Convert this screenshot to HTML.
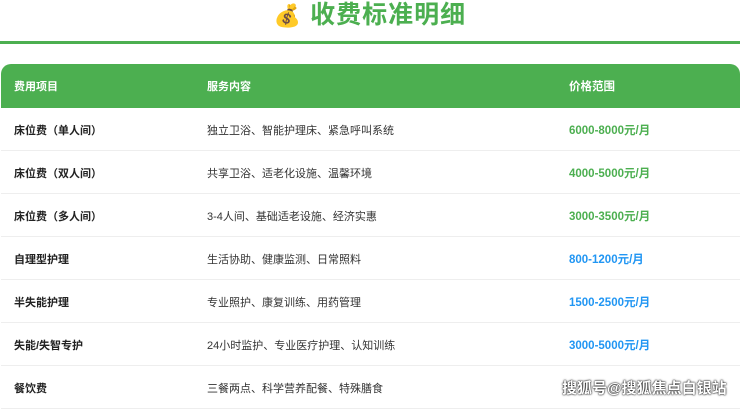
<!DOCTYPE html>
<html><head><meta charset="utf-8"><style>
body{margin:0;width:740px;height:403px;overflow:hidden;background:#fff;font-family:"Liberation Sans","Noto Sans CJK SC",sans-serif;position:relative}
.title{position:absolute;top:0;left:0;width:740px;text-align:center;font-size:25px;font-weight:bold;color:#4caf50;line-height:30px;letter-spacing:1px}
.line{position:absolute;top:41px;left:0;width:740px;height:3px;background:#4caf50}
.tbl{position:absolute;top:64px;left:1px;width:739px;border-radius:10px 10px 0 0;overflow:hidden}
.row{height:42px;border-bottom:1px solid #eee;position:relative;font-size:11px;color:#333}
.row span{position:absolute;top:2px;line-height:43px}
.h{background:#4caf50;color:#fff;font-weight:bold;height:44px;border:none}
.h span{line-height:46px;top:0}
.c1{left:13px}.c2{left:206px}.c3{left:568px;font-weight:bold;font-size:11.5px}
.r .c1{font-weight:bold;color:#222}
.g{color:#4caf50}.b{color:#2196f3}.o{color:#ff9800}
.wm{position:absolute;left:562px;top:377px;font-size:15px;font-weight:bold;color:#fff;text-shadow:0 0 2px #000,0 0 1px #000}
</style></head><body>
<div class="title"><span style="font-size:22px">💰</span> 收费标准明细</div>
<div class="line"></div>
<div class="tbl">
<div class="row h"><span class="c1">费用项目</span><span class="c2">服务内容</span><span class="c3">价格范围</span></div>
<div class="row r"><span class="c1">床位费（单人间）</span><span class="c2">独立卫浴、智能护理床、紧急呼叫系统</span><span class="c3 g">6000-8000元/月</span></div>
<div class="row r"><span class="c1">床位费（双人间）</span><span class="c2">共享卫浴、适老化设施、温馨环境</span><span class="c3 g">4000-5000元/月</span></div>
<div class="row r"><span class="c1">床位费（多人间）</span><span class="c2">3-4人间、基础适老设施、经济实惠</span><span class="c3 g">3000-3500元/月</span></div>
<div class="row r"><span class="c1">自理型护理</span><span class="c2">生活协助、健康监测、日常照料</span><span class="c3 b">800-1200元/月</span></div>
<div class="row r"><span class="c1">半失能护理</span><span class="c2">专业照护、康复训练、用药管理</span><span class="c3 b">1500-2500元/月</span></div>
<div class="row r"><span class="c1">失能/失智专护</span><span class="c2">24小时监护、专业医疗护理、认知训练</span><span class="c3 b">3000-5000元/月</span></div>
<div class="row r"><span class="c1">餐饮费</span><span class="c2">三餐两点、科学营养配餐、特殊膳食</span><span class="c3 o"></span></div>
</div>
<div class="wm">搜狐号@搜狐焦点白银站</div>
</body></html>
